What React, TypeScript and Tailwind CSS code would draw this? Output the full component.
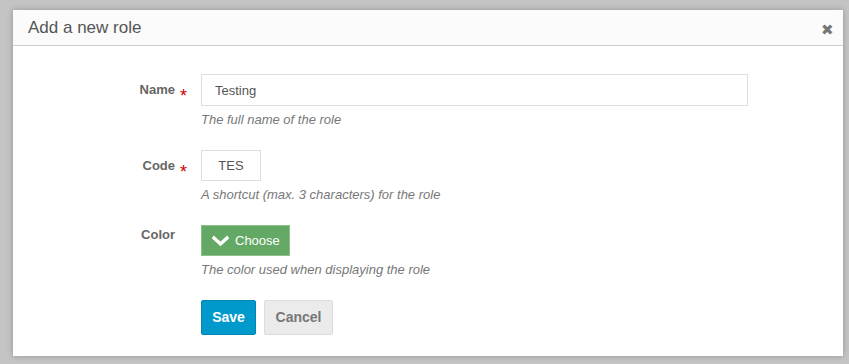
import React from 'react';

const Field = ({
  label,
  required,
  help,
  labelPad = 'pt-[8px]',
  children,
}: {
  label: string;
  required?: boolean;
  help: string;
  labelPad?: string;
  children: React.ReactNode;
}) => (
  <div className="flex mb-[21px]">
    <div className={`w-[188px] flex justify-end pr-[14px] ${labelPad}`}>
      <span className="text-[13px] font-bold text-[#666] leading-[16px]">{label}</span>
      <span className={`ml-[5px] w-[7px] text-[18px] text-[#c00] leading-[16px] mt-[6px] ${required ? '' : 'invisible'}`}>*</span>
    </div>
    <div className="flex flex-col items-start">
      {children}
      <p className="mt-[5px] text-[13px] italic text-[#777] leading-[18px]">{help}</p>
    </div>
  </div>
);

export default function App() {
  return (
    <div className="h-[364px] bg-[#c4c4c4] pt-[10px] pl-[13px] font-['Liberation_Sans',Arial,sans-serif]">
      <div className="w-[830px] h-[346px] bg-white shadow-[0_0_6px_rgba(0,0,0,0.25)]">
        <div className="h-[36px] bg-[#fbfbfb] border-b border-[#cccccc] flex items-center justify-between pl-[15px] pr-[9px]">
          <h3 className="text-[17px] text-[#555] leading-none">Add a new role</h3>
          <span className="text-[15px] text-[#777] leading-none mt-[3px]">✖</span>
        </div>
        <div className="pt-[28px]">
          <Field label="Name" required help="The full name of the role">
            <input
              readOnly
              value="Testing"
              className="w-[547px] h-[32px] border border-[#ddd] px-[13px] text-[13px] text-[#555] outline-none"
            />
          </Field>
          <Field label="Code" required help="A shortcut (max. 3 characters) for the role">
            <input
              readOnly
              value="TES"
              className="w-[60px] h-[31px] border border-[#ddd] text-center text-[13px] text-[#555] outline-none"
            />
          </Field>
          <Field label="Color" labelPad="pt-[2px]" help="The color used when displaying the role">
            <button className="w-[89px] h-[31px] bg-[#63a864] border border-[#8cc08c] flex items-center pl-[10px] text-[13px] text-white">
              <svg width="17" height="12" viewBox="0 0 17 12" className="mr-[6px]">
                <path d="M2 3 L8.5 9 L15 3" stroke="white" strokeWidth="3.4" fill="none" strokeLinecap="square" />
              </svg>
              Choose
            </button>
          </Field>
          <div className="flex pl-[188px] gap-[8px]">
            <button className="w-[55px] h-[35px] bg-[#0099cc] border border-[#0086b3] rounded-[2px] text-[14px] font-bold text-white">
              Save
            </button>
            <button className="w-[69px] h-[35px] bg-[#ebebeb] border border-[#dcdcdc] rounded-[2px] text-[14px] font-bold text-[#777]">
              Cancel
            </button>
          </div>
        </div>
      </div>
    </div>
  );
}
